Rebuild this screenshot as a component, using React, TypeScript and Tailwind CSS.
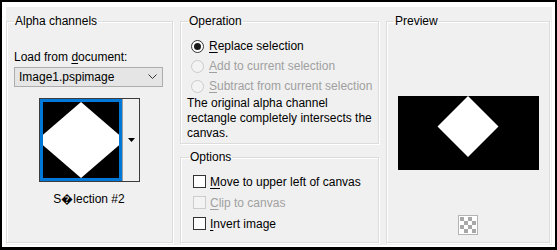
import React from "react";

function Group({
  title,
  className,
  legendClass,
  children,
}: {
  title: string;
  className: string;
  legendClass?: string;
  children?: React.ReactNode;
}) {
  return (
    <fieldset
      className={`border border-[#dcdcdc] shadow-[inset_1px_1px_0_#fff,1px_1px_0_#fff] ${className}`}
    >
      <legend className={`px-[1px] leading-[14px] text-black ${legendClass ?? ""}`}>{title}</legend>
      {children}
    </fieldset>
  );
}

function Radio({ checked, disabled }: { checked?: boolean; disabled?: boolean }) {
  return (
    <span
      className={`flex h-[13px] w-[13px] items-center justify-center rounded-full border ${
        disabled ? "border-[#cccccc] bg-[#f3f3f3]" : "border-[#333333] bg-white"
      }`}
    >
      {checked && <span className="h-[7px] w-[7px] rounded-full bg-[#1a1a1a]" />}
    </span>
  );
}

function Check({ disabled }: { disabled?: boolean }) {
  return (
    <span
      className={`block h-[13px] w-[13px] border ${
        disabled ? "border-[#cccccc] bg-[#f3f3f3]" : "border-[#333333] bg-white"
      }`}
    />
  );
}

function Label({ text, disabled }: { text: string; disabled?: boolean }) {
  return (
    <span className={disabled ? "text-[#a0a0a0]" : "text-black"}>
      <span className="underline underline-offset-2">{text[0]}</span>
      {text.slice(1)}
    </span>
  );
}

function Checker() {
  const cells = [];
  for (let r = 0; r < 4; r++)
    for (let c = 0; c < 4; c++)
      if ((r + c) % 2 === 0)
        cells.push(<rect key={`${r}-${c}`} x={2 + c * 4} y={2 + r * 4} width={4} height={4} fill="#a8a8a8" />);
  return (
    <svg width="20" height="20" viewBox="0 0 20 20">
      <rect x="0.5" y="0.5" width="19" height="19" fill="#ffffff" stroke="#b4b4b4" />
      {cells}
    </svg>
  );
}

export default function App() {
  return (
    <div className="h-[250px] w-[557px] border-2 border-b-[3px] border-black bg-white pb-[2px] pl-[4px] pr-[3px] pt-[5px] font-['Liberation_Sans',sans-serif] text-[12px] text-black">
      <div className="flex h-full gap-[7px] bg-[#f0f0f0] pt-[7px]">
        {/* Alpha channels */}
        <Group title="Alpha channels" className="h-[229px] w-[167px] pl-[7px]">
          <div className="mt-[22px] leading-[15px]">
            Load from <span className="underline underline-offset-2">d</span>ocument:
          </div>
          <div className="mt-[2px] flex h-[20px] w-[149px] items-center justify-between border border-[#adadad] bg-[#e5e5e5] pl-[4px] pr-[5px]">
            <span>Image1.pspimage</span>
            <svg width="9" height="6" viewBox="0 0 9 6">
              <path d="M0.5 0.5 L4.5 4.5 L8.5 0.5" fill="none" stroke="#333" strokeWidth="1" />
            </svg>
          </div>
          <div className="ml-[25px] mt-[11px] flex w-[101px] border border-[#3c3c3c]">
            <div className="h-[82px] w-[82px] overflow-hidden border-[3px] border-[#0078d7] bg-black">
              <svg width="76" height="76" viewBox="0 0 76 76">
                <polygon points="38,0 82,38 38,76 -6,38" fill="#ffffff" />
              </svg>
            </div>
            <div className="flex flex-1 items-center justify-center border-l border-[#a0a0a0] bg-[#f0f0f0]">
              <svg width="7" height="4" viewBox="0 0 7 4">
                <path d="M0 0 H7 L3.5 4 Z" fill="#000" />
              </svg>
            </div>
          </div>
          <div className="mt-[10px] w-[150px] text-center leading-[15px]">S{"\uFFFD"}lection #2</div>
        </Group>

        {/* middle column */}
        <div className="flex w-[199px] flex-col gap-[6px]">
          <Group title="Operation" className="h-[130px] pl-[10px]" legendClass="-ml-[3px]">
            <div className="mt-[8px] flex flex-col">
              <div className="flex h-[20px] items-center gap-[5px]">
                <Radio checked />
                <Label text="Replace selection" />
              </div>
              <div className="flex h-[20px] items-center gap-[5px]">
                <Radio disabled />
                <Label text="Add to current selection" disabled />
              </div>
              <div className="flex h-[20px] items-center gap-[5px]">
                <Radio disabled />
                <Label text="Subtract from current selection" disabled />
              </div>
            </div>
            <div className="-ml-[4px] leading-[15px]">
              The original alpha channel
              <br />
              rectangle completely intersects the
              <br />
              canvas.
            </div>
          </Group>
          <Group title="Options" className="h-[93px] pl-[12px]" legendClass="-ml-[4px]">
            <div className="mt-[7px] flex flex-col">
              <div className="flex h-[21px] items-center gap-[4px]">
                <Check />
                <Label text="Move to upper left of canvas" />
              </div>
              <div className="flex h-[21px] items-center gap-[4px]">
                <Check disabled />
                <Label text="Clip to canvas" disabled />
              </div>
              <div className="flex h-[21px] items-center gap-[4px]">
                <Check />
                <Label text="Invert image" />
              </div>
            </div>
          </Group>
        </div>

        {/* Preview */}
        <Group title="Preview" className="h-[229px] w-[164px] pl-[7px]">
          <div className="-ml-[7px] flex flex-col items-center">
            <div className="mt-[68px] h-[74px] w-[141px] bg-black">
              <svg width="141" height="74" viewBox="0 0 141 74">
                <polygon points="70,0 100.5,30.5 70,61 39.5,30.5" fill="#ffffff" />
              </svg>
            </div>
            <div className="mt-[45px]">
              <Checker />
            </div>
          </div>
        </Group>
      </div>
    </div>
  );
}
